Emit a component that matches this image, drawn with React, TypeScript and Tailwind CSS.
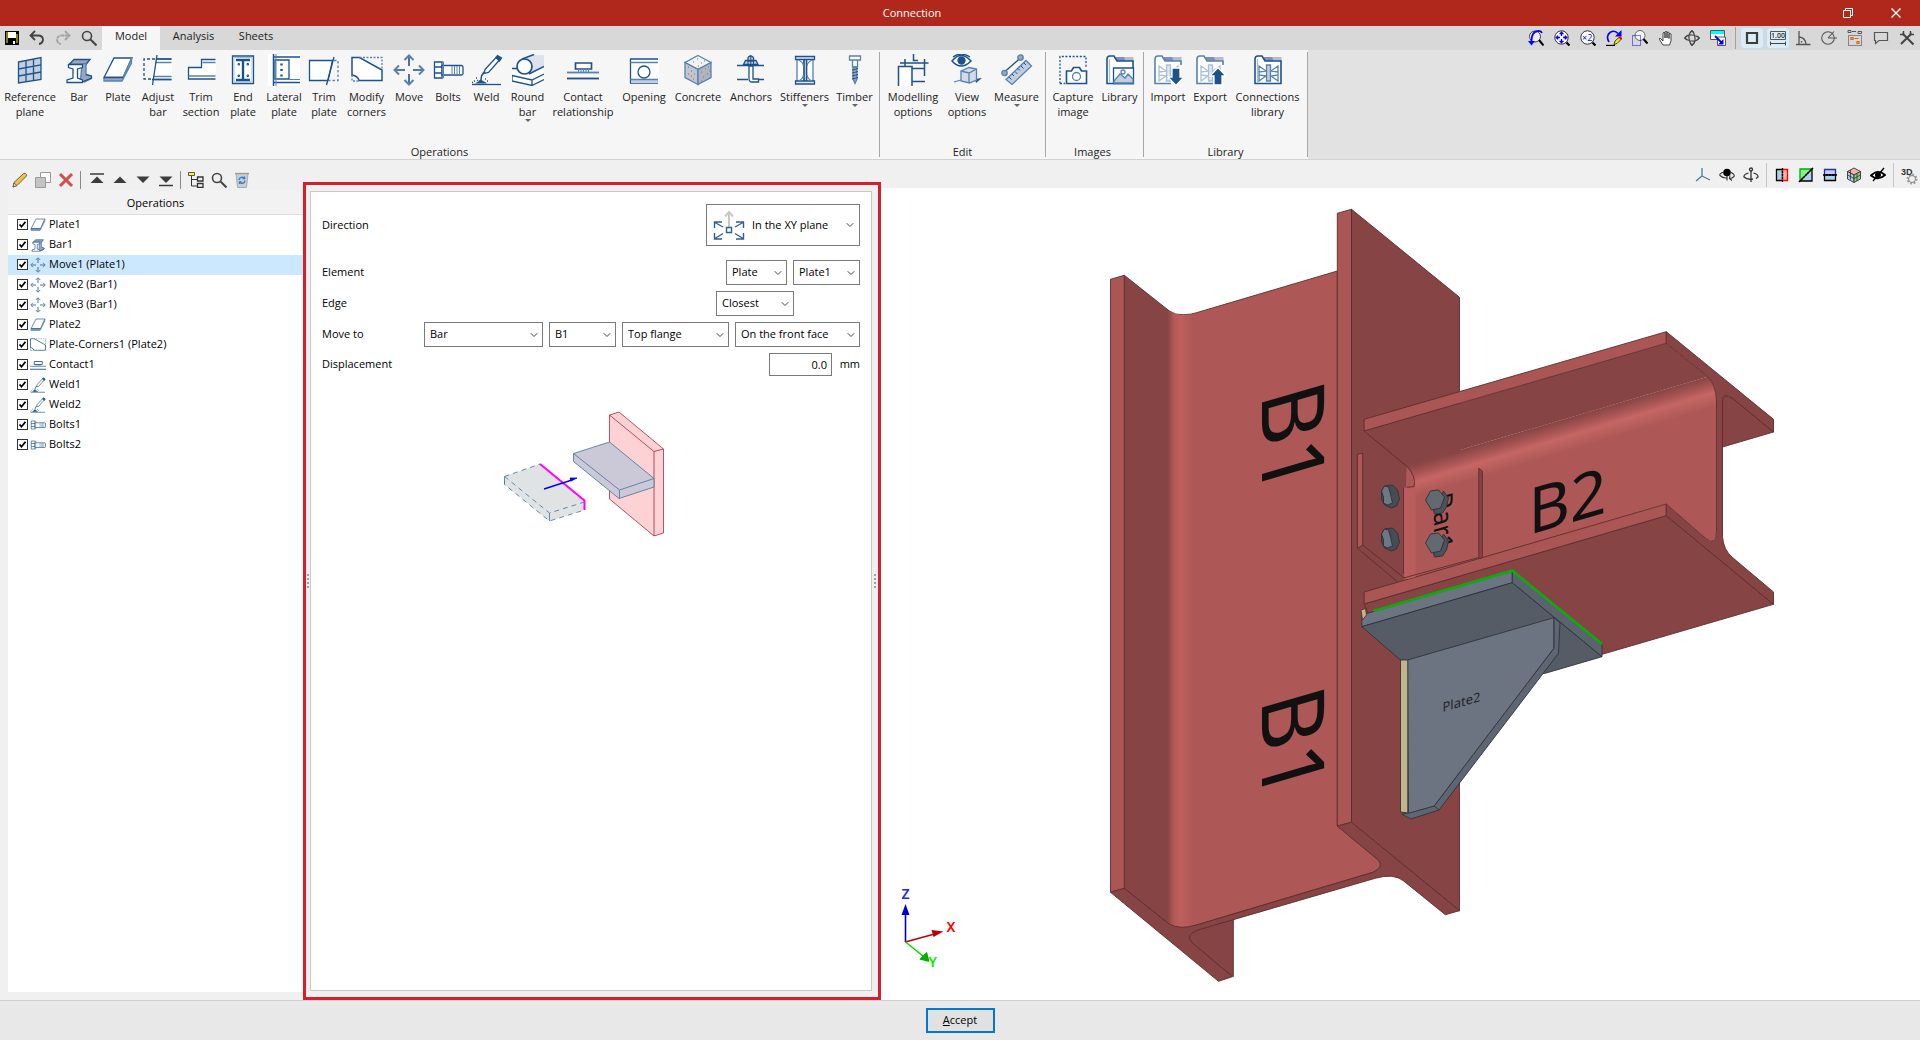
import React from "react";
import { ChevronDown } from "lucide-react";

type IconProps = { className?: string };

const DARK = "#1d528c";
const MID = "#5582b0";
const SOFT = "#c3cde0";

const Svg = ({ className = "size-8", box = 32, children }: { className?: string; box?: number; children: React.ReactNode }) => (
    <svg viewBox={`0 0 ${box} ${box}`} className={`${className} shrink-0`} fill="none" stroke={DARK} strokeWidth={1.3}>
        {children}
    </svg>
);

/* ---------- Ribbon icons ---------- */

const RefPlaneIcon = ({ className }: IconProps) => (
    <Svg className={className}>
        <path d="M4.5 8 27 3.5V25.5L4.5 29z" fill={SOFT} />
        <path d="M12 6.5v21M19.5 5v22M4.5 15 27 10.8M4.5 22 27 18" />
    </Svg>
);

const BarIcon = ({ className }: IconProps) => (
    <Svg className={className}>
        <path d="M11 5.500h16l-4 5H6z" fill="#9aa5bf" />
        <path d="M19 10.500 23 9v15l4.500 1-6 3-4-2z" fill="#9aa5bf" stroke={MID} />
        <path d="M5.500 10.500h14v3l-5 1.500v9l5 2v2.500H4V26l6-2v-9l-4.500-1.500z" fill="#fff" />
        <path d="M20 27.500 28.500 24v-2L23 20.500" fill="#9aa5bf" />
    </Svg>
);

const PlateIcon = ({ className }: IconProps) => (
    <Svg className={className}>
        <path d="M2 23.500 12 4h18l-9 19.500z" fill="#fff" />
        <path d="M2 23.500V27h18l9.500-18V4L21 23.500z" fill="#9aa5bf" stroke={MID} />
        <path d="M2 23.500h19" />
    </Svg>
);

const AdjustIcon = ({ className }: IconProps) => (
    <Svg className={className}>
        <path d="M14 6h16v19H10z" fill="#fff" stroke="none" />
        <path d="M14 5h15.500M13 8.500h16.500M11 22.500h18.500M10 25.500h19.500" stroke={MID} />
        <path d="M15 1 10.500 31M14 5h15.500M10 25.500h19.500" />
        <path d="M13 5H2v20h8" strokeDasharray="3 2" />
    </Svg>
);

const TrimSectionIcon = ({ className }: IconProps) => (
    <Svg className={className}>
        <path d="M3 13.500h12V5.500h15.500v20H3z" fill="#fff" stroke="none" />
        <path d="M30.500 5.500H16.500v8H3.500v11.500h27" />
        <path d="M30.500 8.500h-13M3.500 22h27" stroke={MID} />
    </Svg>
);

const EndPlateIcon = ({ className }: IconProps) => (
    <Svg className={className}>
        <path d="M5.500 2h21v27.500h-21z" fill="#fff" />
        <path d="M7 3.500h18V28H7z" stroke="#a9bdd6" strokeWidth={1} />
        <path d="M9 6h14M9 26h14M16 6v20" strokeWidth={2.400} />
        <path d="M11 9.500h1.500v1.500H11zM20 9.500h1.500v1.500H20zM11 21h1.500v1.500H11zM20 21h1.500v1.500H20z" strokeWidth={1} />
    </Svg>
);

const LateralPlateIcon = ({ className }: IconProps) => (
    <Svg className={className}>
        <path d="M0 0h32v32H0z" fill="#fff" stroke="none" />
        <path d="M5.500 0v32M5.500 3H32M5.500 28.500H32" strokeWidth={1.500} />
        <path d="M7 6h14v19H7z" />
        <path d="M5.500 25.500H32M8 0v32" stroke={MID} strokeWidth={1} />
        <path d="M13.500 9.500v2M13.500 15v2M13.500 20.500v2" strokeWidth={2.400} />
    </Svg>
);

const TrimPlateIcon = ({ className }: IconProps) => (
    <Svg className={className}>
        <path d="M1.500 6.500h23l-4.500 20H1.500z" fill="#fff" />
        <path d="M26 3 18.500 31" />
        <path d="M26 6.500h4v20h-9" strokeDasharray="2.500 2" stroke={MID} />
    </Svg>
);

const CornersIcon = ({ className }: IconProps) => (
    <Svg className={className}>
        <path d="M1 3.500h7.500L31 16v10.500H8Q7 22 1 21z" fill="#fff" strokeWidth={1.500} />
        <path d="M8.500 3.500H31V16" strokeDasharray="2 1.500" stroke={MID} />
        <path d="M1 21v6h7" strokeDasharray="2 1.500" stroke={MID} />
    </Svg>
);

const MoveIcon = ({ className }: IconProps) => (
    <Svg className={className}>
        <path d="M16 2v10M16 20v10M2 16h10M20 16h10" strokeWidth={1.600} />
        <path d="m11.500 6 4.500-4.500L20.500 6M11.500 26l4.500 4.500 4.500-4.500M6 11.500 1.500 16 6 20.500M26 11.500l4.500 4.500-4.500 4.500" stroke={MID} strokeWidth={2} />
    </Svg>
);

const BoltsIcon = ({ className }: IconProps) => (
    <Svg className={className}>
        <path d="M2.500 8H10v16H2.500zM2.500 13H10M2.500 19H10" fill="#fff" />
        <path d="M10 11.500h19.500q1.500 0 1.500 2v6q0 1.500-1.500 1.500H10z" fill="#fff" />
        <path d="M20 12v9M22.500 12v9M25 12v9M27.500 12v9M10 8h1.500v16H10" stroke={MID} strokeWidth={1} />
    </Svg>
);

const WeldIcon = ({ className }: IconProps) => (
    <Svg className={className}>
        <path d="m14 15.500 11-12 3.500 2.500-11 12.500-4.500 1z" fill="#fff" />
        <path d="m25 3.500 1.500-2 4 2.500-2 3z" fill={DARK} />
        <path d="m13 18-2.500 4-.5 4" strokeWidth={1.500} />
        <path d="M1 30.500h29" />
        <path d="M4 29.500q2-2 3-1.500 2-4 5-1 3 1 4 2.500z" fill={DARK} stroke="none" />
        <path d="M3 27h1M5 24h1M1 28.500h1M14 25h1M16 27h1M6 26.500h1" strokeWidth={1.500} />
    </Svg>
);

const RoundBarIcon = ({ className }: IconProps) => (
    <Svg className={className}>
        <path d="M0 16v14l20 1.500L32 25V15z" fill="#fff" stroke="none" />
        <path d="M12 4.500 22 1h10v11L17 20.500z" fill="#dde2ec" stroke="none" />
        <path d="M10 5 22 .5M17 20 32 12.500" strokeWidth={1.500} />
        <circle cx="12.500" cy="12.500" r="7.500" fill="#fff" strokeWidth={1.700} />
        <path d="M0 14.500h5M0 21.500l20 4.500 12-6M0 21.500V27l20 4.500V26M20 31.500 32 25.500" />
    </Svg>
);

const ContactIcon = ({ className }: IconProps) => (
    <Svg className={className}>
        <path d="M8.500 9h16v6h-16z" fill="#fff" strokeWidth={1.700} />
        <path d="M11.500 15v3M14 15v3M16.500 15v3M19 15v3M21.500 15v3" strokeWidth={1} stroke={MID} />
        <path d="M0 18.500h32" strokeWidth={1.800} stroke={MID} />
        <path d="M0 24.500h32" strokeWidth={1.800} />
    </Svg>
);

const OpeningIcon = ({ className }: IconProps) => (
    <Svg className={className}>
        <path d="M2.500 5H31v24H2.500z" fill="#fff" stroke="none" />
        <path d="M30 5H2.500v24H30" />
        <path d="M3 25.500h27V29H3z" fill={SOFT} stroke="none" />
        <path d="M2.500 8.500H30M2.500 25.500H30" stroke={MID} />
        <circle cx="16" cy="18" r="6" />
    </Svg>
);

const ConcreteIcon = ({ className }: IconProps) => (
    <Svg className={className}>
        <path d="m16 1.500 13 7-13 7-13-7z" fill="#f3f3f5" stroke={MID} />
        <path d="M3 8.500 16 15.500v15l-13-7z" fill="#c2c5cb" stroke={MID} />
        <path d="m29 8.500-13 7v15l13-7z" fill="#b0b5bd" stroke={MID} />
        <path d="M6 13h1M9 17h1M12 20h1M6 20h1M11 25h1M9 22h1M19 18h1M23 15h1M26 13h1M21 23h1M25 20h1M19 27h1M27 17h1M11 8h1M15 5h1M19 9h1M16 12h1M22 7h1" stroke="#6b7891" strokeWidth={1} />
    </Svg>
);

const AnchorsIcon = ({ className }: IconProps) => (
    <Svg className={className}>
        <path d="M13 3.500q1-1.500 2.500-1.500T18.500 3.500V7H13zM10.500 6.500h10.500l2 4H8.500z" fill={SOFT} />
        <path d="M2 11.500h27M2 25.500h11M24 25.500h5" strokeWidth={1.600} />
        <path d="M14 12v12.500q0 3.500 3 3.500h6.500v-3H18V12z" fill="#fff" />
        <path d="M15.800 1v10M13 6.500v4M18.500 6.500v4" strokeWidth={1} />
    </Svg>
);

const StiffenersIcon = ({ className }: IconProps) => (
    <Svg className={className}>
        <path d="M8 4h16v24H8z" fill="#fff" stroke={MID} />
        <path d="M6.500 2.500h19v3h-19zM6.500 27h19v3h-19z" fill="#e4e9f2" />
        <path d="M15 6v21M17.500 6v21" strokeWidth={1.700} />
        <path d="M9.500 6Q14 8 14.500 12M9.500 27Q14 25 14.500 21M23 6q-4.500 2-5 6M23 27q-4.500-2-5-6" stroke={MID} />
    </Svg>
);

const TimberIcon = ({ className }: IconProps) => (
    <Svg className={className}>
        <path d="M10.500 2h11v4h-11zM13.500 6h5v7h-5z" fill="#fff" stroke={MID} />
        <path d="M14 13h4v12l-2 4.500L14 25z" fill="#9aa5bf" stroke={MID} />
        <path d="m13 16 6-1.500M13 19l6-1.500M13 22l6-1.500M13 25l6-1.500" stroke={DARK} strokeWidth={1} />
    </Svg>
);

const ModellingIcon = ({ className }: IconProps) => (
    <Svg className={className}>
        <path d="M1.500 12.500H14V32H1.500z" fill="#fff" stroke="none" />
        <path d="M1.500 32V12.500H15V32M8 12V5M3 9h28.500M16.500 0v6.500H21M27.500 5v17M15 14.500h13M15 27.500h13" strokeWidth={1.500} />
    </Svg>
);

const ViewIcon = ({ className }: IconProps) => (
    <Svg className={className}>
        <path d="M1 7Q10-4 20 7 10 17 1 7z" fill="#fff" strokeWidth={1.500} />
        <path d="M2 3Q10-3 19 3" />
        <circle cx="10.500" cy="6.500" r="3.500" fill={DARK} />
        <path d="m24 25 7-1-6 5z" fill={DARK} stroke="none" />
        <path d="m10 17 8-3.500 7.500 1.500v11l-7 3-8.500-2z" fill="#d5dae4" stroke={MID} />
        <path d="m10 17 8 2 7.500-4M18 19v10M3 28l7-2" stroke={MID} />
    </Svg>
);

const MeasureIcon = ({ className }: IconProps) => (
    <Svg className={className}>
        <path d="M4 17.500 19 4.500" />
        <circle cx="3.500" cy="19" r="2.700" fill="#9aa5bf" stroke={MID} />
        <circle cx="19.500" cy="3.500" r="2.700" fill="#9aa5bf" stroke={MID} />
        <path d="m5 25.500 20-19L30.500 12 11 30.500z" fill={SOFT} stroke={MID} />
        <path d="m8 23 2.500 2.500M11 20l2 2M14 17.500l2.500 2.500M17 14.500l2 2M20 12l2.500 2.500M23 9l2 2" stroke={DARK} strokeWidth={1} />
    </Svg>
);

const CaptureIcon = ({ className }: IconProps) => (
    <Svg className={className}>
        <path d="M3 29.500V2.500h26V13M3 29.500h5" strokeDasharray="2 1.600" />
        <path d="M9.500 17h5l2-3.500h6l2 3.500h5v12.500h-20z" fill="#fff" strokeWidth={1.600} />
        <circle cx="19.500" cy="22.500" r="4" stroke={MID} />
    </Svg>
);

const FolderBase = () => (
    <>
        <path d="M12 3h17.500v6H12z" fill="#b4bdd0" stroke="none" />
        <path d="M12 3h8l1.500 4H12z" fill="#8190b2" stroke="none" />
        <path d="M3 5q0-3 3-3h4l3 5h16v22.500H3z" fill="#fff" strokeWidth={1.600} />
        <path d="M5.500 29V5" stroke="#a9bdd6" />
    </>
);

const LibraryIcon = ({ className }: IconProps) => (
    <Svg className={className}>
        <FolderBase />
        <path d="M9.500 14h20v15.500h-20z" fill="#fff" />
        <path d="m10 27 6-7 5 4 3-4 5 5v4H10z" fill={SOFT} stroke={MID} />
        <circle cx="19" cy="18" r="2" stroke={MID} />
    </Svg>
);

const JointMark = () => (
    <>
        <path d="M14.500 11h4v16h-4z" fill={SOFT} stroke={MID} />
        <path d="m7 12 7 5-7 1v3l7 1-7 5zM26 12l-7 5 7 1v3l-7 1 7 5z" stroke={MID} />
    </>
);

/* Folder left open on the right, where the arrow sits */
const OpenFolder = () => (
    <>
        <path d="M12 3h17.500v6H12z" fill="#b4bdd0" stroke="none" />
        <path d="M12 3h8l1.500 4H12z" fill="#8190b2" stroke="none" />
        <path d="M3 5q0-3 3-3h4l3 5h16v22.500H3z" fill="#fff" stroke="none" />
        <path d="M29 11V7H13l-3-5H6Q3 2 3 5v24.500h16" stroke={MID} strokeWidth={1.600} />
        <g opacity={0.500}><JointMark /></g>
    </>
);

const ImportIcon = ({ className }: IconProps) => (
    <Svg className={className}>
        <OpenFolder />
        <path d="M20 14h8v9h4l-8 8.500L16 23h4z" fill={DARK} stroke="#fff" />
    </Svg>
);

const ExportIcon = ({ className }: IconProps) => (
    <Svg className={className}>
        <OpenFolder />
        <path d="M20 31h8v-9h4l-8-8.500L16 22h4z" fill={DARK} stroke="#fff" />
    </Svg>
);

const ConnLibraryIcon = ({ className }: IconProps) => (
    <Svg className={className}>
        <FolderBase />
        <JointMark />
    </Svg>
);

/* ---------- Small toolbar icons ---------- */

const SaveIcon = () => (
    <Svg className="size-4" box={16}>
        <path d="M1 1h14v14H1z" fill="#000" stroke="none" />
        <path d="M2 2h2v11H2zM12 4h2v9h-2z" fill="#808000" stroke="none" />
        <path d="M4 2h8v6H4zM9 11h2v3H9z" fill="#fff" stroke="none" />
    </Svg>
);

const UndoIcon = () => (
    <Svg className="size-4" box={16}>
        <path d="M6 1 1.500 5.500 6 10M2 5.500h7q5 0 5 4.500-.5 3.500-4 4" stroke="#444" strokeWidth={1.800} />
    </Svg>
);

const RedoIcon = () => (
    <Svg className="size-4" box={16}>
        <path d="m10 1 4.500 4.500L10 10M14 5.500H7q-5 0-5 4.500.5 3.500 4 4" stroke="#a3a3a3" strokeWidth={1.800} strokeDasharray="4 .6" />
    </Svg>
);

const SearchIcon = () => (
    <Svg className="size-4" box={16}>
        <circle cx="6" cy="6" r="4.500" stroke="#444" strokeWidth={1.600} />
        <path d="m9.500 9.500 6 6" stroke="#444" strokeWidth={2} />
    </Svg>
);

const Lens = () => (
    <>
        <circle cx="7.500" cy="7.500" r="6.700" fill="#fff" stroke="#333" strokeWidth={1} />
        <path d="m12.500 12.500 3 3" stroke="#000" strokeWidth={2.200} />
    </>
);

const ZoomPrevIcon = () => (
    <Svg className="size-4" box={16}>
        <circle cx="7" cy="6.500" r="5.500" fill="#eee" stroke="#444" strokeWidth={1} />
        <path d="m11 10 4.500 5.500" stroke="#000" strokeWidth={2} />
        <path d="M14 3q-1-2.500-4-2Q3 2 3.500 12" stroke="#00f" strokeWidth={1.800} />
        <path d="M0 11h7l-3.500 4.500z" fill="#00f" stroke="none" />
    </Svg>
);

const ZoomAllIcon = () => (
    <Svg className="size-4" box={16}>
        <Lens />
        <path d="m7.500 1.500 2 2.500h-4zM7.500 13.500l2-2.500h-4zM1.500 7.500l2.500-2v4zM13.500 7.500l-2.500-2v4z" fill="#00f" stroke="#00f" strokeWidth={0.600} />
        <path d="M7.500 3v3M7.500 9v3M3 7.500h3M9 7.500h3" stroke="#00f" />
    </Svg>
);

const ZoomTwoIcon = () => (
    <Svg className="size-4" box={16}>
        <Lens />
        <text x="2" y="11" fill="#00f" stroke="none" fontSize="9" fontFamily="Open Sans, sans-serif">×2</text>
    </Svg>
);

const RedrawIcon = () => (
    <Svg className="size-4" box={16}>
        <path d="M3 12Q-.5 6 4 2.500 8.500-.5 12 3.500" stroke="#00f" strokeWidth={1.600} />
        <path d="M15.500 0v6.500H9z" fill="#00f" stroke="none" />
        <path d="m8 14.500 1-3.500 4.500-4 2 2-4.500 4.500z" fill="#ffe600" stroke="#000" strokeWidth={0.700} />
        <path d="m13.500 7 2 2" stroke="#d00" strokeWidth={2} />
        <path d="M0 15.500h9" stroke="#000" />
    </Svg>
);

const ZoomWindowIcon = () => (
    <Svg className="size-4" box={16}>
        <circle cx="8" cy="5.500" r="5" fill="#f4f4f4" stroke="#666" strokeWidth={1} />
        <path d="m11.500 9 4 4.500" stroke="#000" strokeWidth={2} />
        <path d="M.5 5.500h8v10h-8z" stroke="#00f" strokeWidth={1} strokeDasharray="1 1" />
    </Svg>
);

const HandIcon = () => (
    <Svg className="size-4" box={16}>
        <path d="M5 15 1.500 9.500Q1 8 2.500 8.500L5 11V3q1-1.500 2 0v5-6q1-1.500 2 0v6-5.500q1-1 2 0V8.500 4q1-1 2 0v7l-1.500 4z" fill="#fff" stroke="#333" strokeWidth={0.900} />
    </Svg>
);

const OrbitIcon = () => (
    <Svg className="size-4" box={16}>
        <path d="M8 1Q4.500 3 5 8t3 7q3.500-2 3-7T8 1zM1 8q2-3.500 7-3t7 3q-2 3.500-7 3T1 8z" stroke="#444" strokeWidth={1.200} />
        <path d="m6 3 2-2.500L10 3M6 13l2 2.500 2-2.500M3 6 .5 8 3 10M13 6l2.500 2-2.500 2" stroke="#444" strokeWidth={1.200} />
    </Svg>
);

const WindowsIcon = () => (
    <Svg className="size-4" box={16}>
        <path d="M.5.500h14v9H.5z" fill="#fff" stroke="#555" strokeWidth={1} />
        <path d="M1 1h13v3H1z" fill="#0ff" stroke="none" />
        <path d="M7.500 7h8v8.500h-8z" fill="#fff" stroke="#555" strokeWidth={1} />
        <path d="m5 6 6.500 6.500" stroke="#00f" strokeWidth={1.800} />
        <path d="M13.500 9v5.500H8z" fill="#00f" stroke="none" />
    </Svg>
);

const SquareIcon = () => (
    <Svg className="size-4" box={16}>
        <path d="M3 3h10v10H3z" stroke="#3c3c3c" strokeWidth={2.200} />
    </Svg>
);

const ScaleIcon = () => (
    <Svg className="size-4" box={16}>
        <path d="M.5 1.500h15v8H.5z" stroke="#555" strokeWidth={1} />
        <path d="M.5 13.500h15M.5 11.500v4M15.500 11.500v4" stroke="#444" strokeWidth={1} />
        <text x="1" y="8" fill="#333" stroke="none" fontSize="7" fontWeight="600" fontFamily="Open Sans, sans-serif">1.00</text>
    </Svg>
);

const AngleIcon = () => (
    <Svg className="size-4" box={16}>
        <path d="M4 1v13.500M1 14.500h14.500M4 7q6.500.5 7 7.500" stroke="#555" strokeWidth={1.300} />
        <path d="M6.500 11v1.500" stroke="#555" />
    </Svg>
);

const CircleAngleIcon = () => (
    <Svg className="size-4" box={16}>
        <circle cx="7" cy="8" r="6.300" stroke="#555" strokeWidth={1.100} />
        <path d="M7 8h9M7 8l6-6.500" stroke="#555" strokeWidth={1.100} />
    </Svg>
);

const LayoutIcon = () => (
    <Svg className="size-4" box={16}>
        <path d="M1.500 5.500h13v10h-13z" stroke="#333" strokeWidth={1} strokeDasharray="1 1" />
        <path d="M1 .5h3v2H1zM11 1.500h3.500v2H11zM5 1.500h4" stroke="#555" strokeWidth={1} />
        <path d="M4 7.500h2v2H4zM10 11.500h2v2h-2zM7.500 8.500h4" stroke="#d2632b" strokeWidth={1.200} />
    </Svg>
);

const CommentIcon = () => (
    <Svg className="size-4" box={16}>
        <path d="M1.500 2.500h13v8H6L2.500 13.500v-3h-1z" stroke="#555" strokeWidth={1.200} />
    </Svg>
);

const ToolsIcon = () => (
    <Svg className="size-4" box={16}>
        <path d="M12.500 3.500 2 14M3.500 3.500l11 11" stroke="#444" strokeWidth={2} />
        <path d="M1 4.500h3.500V1M11.500 1v3.500H15" stroke="#444" strokeWidth={1.500} />
    </Svg>
);

const AxisIcon = () => (
    <Svg className="size-4" box={16}>
        <path d="M7 1v8M7 9l-6 5M7 9l8 4" stroke="#4b7f93" strokeWidth={1.300} />
    </Svg>
);

const TurnEyeIcon = () => (
    <Svg className="size-4" box={16}>
        <circle cx="8" cy="5.500" r="3.800" fill="#000" stroke="none" />
        <path d="M5 5Q0 6.500 1 8.500q3 3 7 2.500M11 5q5 2 4 4.500-2 2-4 2M8 8.500v5M11 8.500l-.5 3 2.500 2" stroke="#333" strokeWidth={1.100} />
    </Svg>
);

const TurnAxisIcon = () => (
    <Svg className="size-4" box={16}>
        <path d="M8 3v12M5.500 6Q.5 7.500 1 10q3 3 9 2M10.500 6q5 1.500 4.500 4l-2 1.500" stroke="#333" strokeWidth={1.300} />
        <circle cx="8" cy="2.500" r="1.500" stroke="#333" />
    </Svg>
);

const SectionXIcon = () => (
    <Svg className="size-4" box={16}>
        <path d="M2.500 2.500h6v11h-6z" fill="#a8d5ee" stroke="#000" />
        <path d="M8.500 2.500h5v11h-5z" fill="#ffb4b4" stroke="#f00" />
        <path d="M8.500 1v14" stroke="#000" strokeDasharray="2 1" />
    </Svg>
);

const SectionYIcon = () => (
    <Svg className="size-4" box={16}>
        <path d="M2 2h12L2 14z" fill="#7cf58a" stroke="#0a0" />
        <path d="M14 2v12H2z" fill="#a8d5ee" stroke="#000" />
        <path d="M1 15 15 1" stroke="#000" strokeDasharray="2 1" />
    </Svg>
);

const SectionZIcon = () => (
    <Svg className="size-4" box={16}>
        <path d="M2.500 2.500h11V8h-11z" fill="#cfc8ff" stroke="#22339a" />
        <path d="M2.500 8h11v5.500h-11z" fill="#a8d5ee" stroke="#000" />
        <path d="M1 8h14" stroke="#000" strokeDasharray="2 1" />
    </Svg>
);

const CubeIcon = () => (
    <Svg className="size-4" box={16}>
        <path d="m8 1 6.500 3.500L8 8 1.500 4.500z" fill="#ffaeae" stroke="#333" strokeWidth={0.900} />
        <path d="M1.500 4.500 8 8v7.500L1.500 12z" fill="#a8cfe4" stroke="#333" strokeWidth={0.900} />
        <path d="M14.500 4.500 8 8v7.500L14.500 12z" fill="#8fce8a" stroke="#333" strokeWidth={0.900} />
        <path d="M1.500 8 8 11.500 14.500 8M4.500 3v9.500M11 6.500V14" stroke="#333" strokeWidth={0.800} />
    </Svg>
);

const HideIcon = () => (
    <Svg className="size-4" box={16}>
        <path d="M1 8.500Q8 1.500 15 8 8 14.500 1 8.500z" fill="#fff" stroke="#000" strokeWidth={1.800} />
        <circle cx="8" cy="8" r="3" fill="#000" stroke="none" />
        <path d="m3 14 11-13" stroke="#000" strokeWidth={1.300} />
    </Svg>
);

const ThreeDIcon = () => (
    <Svg className="size-5" box={20}>
        <circle cx="13" cy="14" r="4" stroke="#999" strokeWidth={3} strokeDasharray="1.600 1.500" />
        <circle cx="13" cy="14" r="3.500" stroke="#888" strokeWidth={1} fill="#eee" />
        <text x="2" y="10" fill="#333" stroke="none" fontSize="9" fontWeight="700" fontFamily="Liberation Sans, sans-serif">3D</text>
    </Svg>
);

const PencilIcon = () => (
    <Svg className="size-4" box={16}>
        <path d="m1 15 1-4.500L11.500 1.500q2-1 3 1 .5 1-.5 2L5 13.500z" fill="#f0c33c" stroke="#555" strokeWidth={0.900} />
        <path d="m1 15 1-4 3 2.500z" fill="#e8dccb" stroke="#555" strokeWidth={0.800} />
    </Svg>
);

const CopyIcon = () => (
    <Svg className="size-4" box={16}>
        <path d="M5.500.5h10v10h-10z" fill="#fff" stroke="#999" strokeWidth={1} />
        <path d="M.5 5.500h10v10H.5z" fill="#c4c4c4" stroke="#999" strokeWidth={1} />
    </Svg>
);

const DeleteIcon = () => (
    <Svg className="size-4" box={16}>
        <path d="m2 2 12 12M14 2 2 14" stroke="#d2504c" strokeWidth={3} />
    </Svg>
);

const ToTopIcon = () => (
    <Svg className="size-4" box={16}>
        <path d="M1 2h14" stroke="#3c3c3c" strokeWidth={1.500} />
        <path d="m8 4.500 6.500 6.500h-13z" fill="#3c3c3c" stroke="none" />
    </Svg>
);

const UpIcon = () => (
    <Svg className="size-4" box={16}>
        <path d="m8 4.500 6.500 6.500h-13z" fill="#3c3c3c" stroke="none" />
    </Svg>
);

const DownIcon = () => (
    <Svg className="size-4" box={16}>
        <path d="M8 11 1.500 4.500h13z" fill="#3c3c3c" stroke="none" />
    </Svg>
);

const ToBottomIcon = () => (
    <Svg className="size-4" box={16}>
        <path d="M8 11 1.500 4.500h13z" fill="#3c3c3c" stroke="none" />
        <path d="M1 13.500h14" stroke="#3c3c3c" strokeWidth={1.500} />
    </Svg>
);

const TreeIcon = () => (
    <Svg className="size-4" box={16}>
        <path d="M.5.500h6v3h-6z" fill="#ff0" stroke="#555" strokeWidth={1} />
        <path d="M3.500 4v10H9M3.500 7.500H9" stroke="#333" strokeWidth={1} />
        <path d="M9.500 5h5.500v4H9.500zM9.500 11.500h5.500v4H9.500z" stroke="#333" />
    </Svg>
);

const TrashIcon = () => (
    <Svg className="size-4" box={16}>
        <path d="M2 1.500h12L12.500 15.500h-9z" fill="#ccc" stroke="#aaa" strokeWidth={1} />
        <path d="M1 1.500h14" stroke="#999" />
        <path d="M5 8a3 3 0 0 1 5.500-1.500M11 8.500A3 3 0 0 1 5.500 10M10.500 4.500v2h-2M5.500 12v-2h2" stroke="#1b7fe0" />
    </Svg>
);

/* ---------- Data ---------- */

type Tool = { label: string; icon: React.ComponentType<IconProps>; width: string; more?: boolean };

const groups: { name: string; pad?: string; tools: Tool[] }[] = [
    {
        name: "Operations",
        tools: [
            { label: "Reference\nplane", icon: RefPlaneIcon, width: "w-[60px]" },
            { label: "Bar", icon: BarIcon, width: "w-[38px]" },
            { label: "Plate", icon: PlateIcon, width: "w-[40px]" },
            { label: "Adjust\nbar", icon: AdjustIcon, width: "w-[40px]" },
            { label: "Trim\nsection", icon: TrimSectionIcon, width: "w-[46px]" },
            { label: "End\nplate", icon: EndPlateIcon, width: "w-[38px]" },
            { label: "Lateral\nplate", icon: LateralPlateIcon, width: "w-[44px]" },
            { label: "Trim\nplate", icon: TrimPlateIcon, width: "w-[36px]" },
            { label: "Modify\ncorners", icon: CornersIcon, width: "w-[49px]" },
            { label: "Move", icon: MoveIcon, width: "w-[36px]" },
            { label: "Bolts", icon: BoltsIcon, width: "w-[42px]" },
            { label: "Weld", icon: WeldIcon, width: "w-[35px]" },
            { label: "Round\nbar", icon: RoundBarIcon, width: "w-[47px]", more: true },
            { label: "Contact\nrelationship", icon: ContactIcon, width: "w-[64px]" },
            { label: "Opening", icon: OpeningIcon, width: "w-[58px]" },
            { label: "Concrete", icon: ConcreteIcon, width: "w-[50px]" },
            { label: "Anchors", icon: AnchorsIcon, width: "w-[56px]" },
            { label: "Stiffeners", icon: StiffenersIcon, width: "w-[51px]", more: true },
            { label: "Timber", icon: TimberIcon, width: "w-[49px]", more: true },
        ],
    },
    {
        name: "Edit",
        tools: [
            { label: "Modelling\noptions", icon: ModellingIcon, width: "w-[66px]" },
            { label: "View\noptions", icon: ViewIcon, width: "w-[42px]" },
            { label: "Measure", icon: MeasureIcon, width: "w-[57px]", more: true },
        ],
    },
    {
        name: "Images",
        pad: "pr-1",
        tools: [
            { label: "Capture\nimage", icon: CaptureIcon, width: "w-[54px]" },
            { label: "Library", icon: LibraryIcon, width: "w-[39px]" },
        ],
    },
    {
        name: "Library",
        tools: [
            { label: "Import", icon: ImportIcon, width: "w-[48px]" },
            { label: "Export", icon: ExportIcon, width: "w-[36px]" },
            { label: "Connections\nlibrary", icon: ConnLibraryIcon, width: "w-[79px]" },
        ],
    },
];

const operations: { name: string; icon: React.ComponentType<IconProps>; selected?: boolean }[] = [
    { name: "Plate1", icon: PlateIcon },
    { name: "Bar1", icon: BarIcon },
    { name: "Move1 (Plate1)", icon: MoveIcon, selected: true },
    { name: "Move2 (Bar1)", icon: MoveIcon },
    { name: "Move3 (Bar1)", icon: MoveIcon },
    { name: "Plate2", icon: PlateIcon },
    { name: "Plate-Corners1 (Plate2)", icon: CornersIcon },
    { name: "Contact1", icon: ContactIcon },
    { name: "Weld1", icon: WeldIcon },
    { name: "Weld2", icon: WeldIcon },
    { name: "Bolts1", icon: BoltsIcon },
    { name: "Bolts2", icon: BoltsIcon },
];

/* ---------- Building blocks ---------- */

const IconButton = ({ label, width, children }: { label: string; width: string; children: React.ReactNode }) => (
    <button type="button" aria-label={label} className={`${width} flex items-center justify-center shrink-0`}>
        {children}
    </button>
);

const Select = ({ label, value, width }: { label: string; value: string; width: string }) => (
    <div className={`${width} relative`}>
        <select
            aria-label={label}
            defaultValue={value}
            className="w-full h-[25px] appearance-none border border-[#7a7a7a] bg-white pl-[5px] outline-none"
        >
            <option>{value}</option>
        </select>
        <ChevronDown size={12} strokeWidth={2} className="absolute right-[3px] top-[7px] text-[#444] pointer-events-none" />
    </div>
);

const Grip = ({ className }: { className: string }) => (
    <div className={`${className} flex flex-col justify-center items-center gap-[2px] pb-5`}>
        <span className="size-[2px] bg-[#a0a0a0]" />
        <span className="size-[2px] bg-[#a0a0a0]" />
        <span className="size-[2px] bg-[#a0a0a0]" />
        <span className="size-[2px] bg-[#a0a0a0]" />
    </div>
);

const TitleBar = () => (
    <header className="h-[26px] bg-[#b0281c] text-white flex">
        <h1 className="flex-1 flex items-center justify-center">Connection</h1>
        <button type="button" aria-label="Restore" className="w-12 flex items-center justify-center">
            <svg viewBox="0 0 10 10" className="size-[10px]" fill="none" stroke="#fff">
                <path d="M.5 2.500h7v7h-7zM2.500 2.500v-2h7v7h-2" />
            </svg>
        </button>
        <button type="button" aria-label="Close" className="w-12 flex items-center justify-center">
            <svg viewBox="0 0 10 10" className="size-[10px]" stroke="#fff" strokeWidth={1.400}>
                <path d="m.5.500 9 9M9.500.500l-9 9" />
            </svg>
        </button>
    </header>
);

const TabBar = () => (
    <div className="h-6 bg-[#d8d8d8] flex text-[#222]">
        <IconButton label="Save" width="w-6"><SaveIcon /></IconButton>
        <IconButton label="Undo" width="w-[26px]"><UndoIcon /></IconButton>
        <IconButton label="Redo" width="w-[26px]"><RedoIcon /></IconButton>
        <IconButton label="Search" width="w-[26px]"><SearchIcon /></IconButton>
        <nav className="flex leading-5">
            <button type="button" className="w-[58px] bg-[#f6f6f6] pb-1">Model</button>
            <button type="button" className="w-[67px] pb-1">Analysis</button>
            <button type="button" className="w-[58px] pb-1">Sheets</button>
        </nav>
        <div className="ml-auto flex">
            <IconButton label="Previous view" width="w-[26px]"><ZoomPrevIcon /></IconButton>
            <IconButton label="Zoom all" width="w-[26px]"><ZoomAllIcon /></IconButton>
            <IconButton label="Zoom x2" width="w-[26px]"><ZoomTwoIcon /></IconButton>
            <IconButton label="Redraw" width="w-[26px]"><RedrawIcon /></IconButton>
            <IconButton label="Zoom window" width="w-[26px]"><ZoomWindowIcon /></IconButton>
            <IconButton label="Pan" width="w-[26px]"><HandIcon /></IconButton>
            <IconButton label="Orbit" width="w-[26px]"><OrbitIcon /></IconButton>
            <IconButton label="Windows" width="w-[26px]"><WindowsIcon /></IconButton>
            <div className="w-px my-px mx-1 bg-[#a0a0a0]" />
            <button type="button" aria-label="Frame" className="w-6 my-px rounded-sm border border-[#c3dcea] bg-[#dcecf6] flex items-center justify-center"><SquareIcon /></button>
            <button type="button" aria-label="Dimensions" className="w-6 my-px ml-[2px] rounded-sm border border-[#c3dcea] bg-[#dcecf6] flex items-center justify-center"><ScaleIcon /></button>
            <IconButton label="Angle" width="w-[26px]"><AngleIcon /></IconButton>
            <IconButton label="Radius" width="w-[26px]"><CircleAngleIcon /></IconButton>
            <IconButton label="Layout" width="w-[26px]"><LayoutIcon /></IconButton>
            <IconButton label="Comment" width="w-[26px]"><CommentIcon /></IconButton>
            <IconButton label="Settings" width="w-[26px]"><ToolsIcon /></IconButton>
        </div>
    </div>
);

const Ribbon = () => (
    <div className="h-[110px] bg-[#e2e2e2] border-b border-[#d2d2d2] flex text-[#222]">
        {groups.map((group) => (
            <section key={group.name} className="bg-[#f6f6f6] flex">
                <div className={`${group.pad ?? ""} flex flex-col justify-between`}>
                    <div className="flex items-start pt-1">
                        {group.tools.map(({ label, icon: Icon, width, more }) => (
                            <button key={label} type="button" className={`${width} flex flex-col items-center`}>
                                <Icon className="size-8" />
                                <span className="mt-[3px] whitespace-pre leading-[15px]">{label}</span>
                                {more && <span className="border-x-3 border-t-3 border-x-transparent border-t-[#666]" />}
                            </button>
                        ))}
                    </div>
                    <h2 className="text-center leading-[15px]">{group.name}</h2>
                </div>
                <div className="w-px my-[2px] bg-[#a8a8a8]" />
            </section>
        ))}
    </div>
);

const OperationsPanel = () => (
    <aside className="w-[303px] shrink-0 pl-2 pb-2 flex flex-col">
        <div className="h-[31px] pt-2 flex items-center">
            <IconButton label="Edit" width="w-[23px]"><PencilIcon /></IconButton>
            <IconButton label="Copy" width="w-[23px]"><CopyIcon /></IconButton>
            <IconButton label="Delete" width="w-[23px]"><DeleteIcon /></IconButton>
            <div className="w-px h-[18px] ml-[3px] mr-1 bg-[#888]" />
            <IconButton label="Move to top" width="w-[23px]"><ToTopIcon /></IconButton>
            <IconButton label="Move up" width="w-[23px]"><UpIcon /></IconButton>
            <IconButton label="Move down" width="w-[23px]"><DownIcon /></IconButton>
            <IconButton label="Move to bottom" width="w-[23px]"><ToBottomIcon /></IconButton>
            <div className="w-px h-[18px] mx-[3px] bg-[#888]" />
            <IconButton label="Tree" width="w-[23px]"><TreeIcon /></IconButton>
            <IconButton label="Find" width="w-[23px]"><SearchIcon /></IconButton>
            <IconButton label="Purge" width="w-[23px]"><TrashIcon /></IconButton>
        </div>
        <h2 className="h-6 bg-[#f2f2f2] border-b border-[#ddd] text-center leading-6">Operations</h2>
        <ul className="flex-1 bg-white">
            {operations.map(({ name, icon: Icon, selected }) => (
                <li key={name} className={selected ? "bg-[#cce8ff]" : ""}>
                    <label className="h-5 pl-[9px] pb-px flex items-center">
                        <span className="relative size-[11px] mr-[2px]">
                            <input type="checkbox" defaultChecked className="peer block size-[11px] appearance-none border border-[#333] bg-white" />
                            <svg viewBox="0 0 11 11" className="absolute inset-0 hidden peer-checked:block pointer-events-none" fill="none" stroke="#000" strokeWidth={1.800}>
                                <path d="m2.500 5.500 2 2.200 4-5" />
                            </svg>
                        </span>
                        <Icon className="size-4" />
                        <span className="ml-[3px]">{name}</span>
                    </label>
                </li>
            ))}
        </ul>
    </aside>
);

const PlaneIcon = () => (
    <svg viewBox="0 0 32 32" className="size-8" fill="none" stroke="#2f5f9b" strokeWidth={1.400}>
        <path d="M16 18V4M12 7.500l4-4.500 4 4.500" stroke="#c8c8c8" strokeWidth={2} />
        <path d="M13.500 18.500h5v5h-5z" />
        <path d="m10 18-8-4.500M1.500 19v-6H9M22 18l8-4.500M30.500 19v-6H23M10 24.500l-8 5M1.500 24v6H9M22 24.500l8 5M30.500 24v6H23" />
    </svg>
);

const MovePreview = () => (
    <svg viewBox="0 0 220 170" className="w-[220px] h-[170px] mx-auto mt-[13px]" strokeWidth={0.800} strokeLinejoin="round">
        {/* Destination face */}
        <g fill="#fcd2d4" stroke="#a52a45">
            <path d="M128.500 26 138 23l44.500 37V144l-9.500 3-44.500-37z" />
            <path d="M128.500 26 173 62.500V147M173 62.500l9.500-2.500" fill="none" />
        </g>
        <path d="M92.500 64.500 128.500 53 173 89.500v8.500l-35 11.500-45.500-37z" fill="#cbc9d8" stroke="#46709c" />
        <path d="M92.500 64.500 138.500 101v8.500M138.500 101 173 89.500" fill="none" stroke="#46709c" />
        {/* Moving plate */}
        <path d="M23.500 87.500 59 75l44.500 37v9L68.500 132 23.500 95.500z" fill="#e0e3e3" stroke="#46709c" strokeDasharray="5 4" />
        <path d="M23.500 87.500 68.500 124 103.500 113" fill="none" stroke="#46709c" strokeDasharray="5 4" />
        <path d="M68.500 124v8M23.500 87.500v8" stroke="#46709c" />
        <path d="m59 75 44.500 36.500V121" fill="none" stroke="#f0f" strokeWidth={2} />
        <path d="m63 100 28-9" stroke="#00f" strokeWidth={1.400} />
        <path d="m96 89-6 3-1-3z" fill="#00f" stroke="#00f" />
    </svg>
);

const PropertiesPanel = () => (
    <section className="w-[578px] shrink-0 mt-[22px] border-[3px] border-[#d3202c] flex">
        <Grip className="w-1" />
        <div className="flex-1 my-[6px] bg-white border border-[#c8c8c8] px-[11px] pt-3">
            <div className="flex items-center justify-between">
                <span>Direction</span>
                <button type="button" className="w-[154px] h-[42px] border border-[#7a7a7a] flex items-center pl-[6px]">
                    <PlaneIcon />
                    <span className="ml-[7px]">In the XY plane</span>
                    <ChevronDown size={12} className="ml-auto mr-[3px] text-[#444]" />
                </button>
            </div>
            <div className="mt-[14px] flex items-center gap-[6px]">
                <span className="mr-auto">Element</span>
                <Select label="Element type" value="Plate" width="w-[61px]" />
                <Select label="Element" value="Plate1" width="w-[67px]" />
            </div>
            <div className="mt-[6px] flex items-center justify-between">
                <span>Edge</span>
                <div className="pr-[66px]">
                    <Select label="Edge" value="Closest" width="w-[78px]" />
                </div>
            </div>
            <div className="mt-[6px] flex items-center gap-[6px]">
                <span className="mr-auto">Move to</span>
                <Select label="Target type" value="Bar" width="w-[119px]" />
                <Select label="Target" value="B1" width="w-[67px]" />
                <Select label="Target part" value="Top flange" width="w-[107px]" />
                <Select label="Target face" value="On the front face" width="w-[125px]" />
            </div>
            <div className="mt-[6px] flex items-center">
                <label htmlFor="displacement" className="mr-auto">Displacement</label>
                <input id="displacement" defaultValue="0.0" className="w-[63px] h-[23px] border border-[#7a7a7a] bg-white px-1 text-right outline-none" />
                <span className="w-7 text-right">mm</span>
            </div>
            <MovePreview />
        </div>
        <Grip className="w-[6px]" />
    </section>
);

const Bolt = ({ x, y, side }: { x: number; y: number; side?: boolean }) => (
    <g transform={`translate(${x} ${y})`} stroke="#2c3238" strokeWidth={0.900}>
        {side ? (
            <>
                <path d="m-9-5 3-5 8-1 5 5 2 9-3 7-5 2-7-3-3-6z" fill="#474c52" />
                <path d="M-9-5q3 6 2 12l4 2 5-2-2-9-2-7-4-1z" fill="#6d7884" />
            </>
        ) : (
            <>
                <path d="m-3 9 10-19 5 7-2 9-4 6-8 1z" fill="#4c5259" />
                <path d="m-11-1 5-9 8-1 6 7-4 11-9 2z" fill="#626971" />
            </>
        )}
    </g>
);

const Model = () => (
    <svg
        viewBox="882 188 1038 812"
        className="w-full h-full"
        fontFamily="Noto Sans, Open Sans, sans-serif"
        stroke="#5d2c2d"
        strokeWidth={0.900}
        strokeLinejoin="round"
    >
        <defs>
            <linearGradient id="columnFillet" x1="0" x2="1" y1="0" y2="0">
                <stop offset="0" stopColor="#874444" />
                <stop offset="0.250" stopColor="#b25957" />
                <stop offset="0.550" stopColor="#be5f5e" />
                <stop offset="1" stopColor="#ad5856" />
            </linearGradient>
            <linearGradient id="beamFillet" gradientUnits="userSpaceOnUse" x1="1536" y1="428" x2="1545" y2="458">
                <stop offset="0" stopColor="#874444" />
                <stop offset="0.300" stopColor="#a75554" />
                <stop offset="0.550" stopColor="#c56664" />
                <stop offset="1" stopColor="#ad5856" />
            </linearGradient>
        </defs>

        {/* Column B1 */}
        <path d="M1124.800 275.300 1169.500 310.700V924l-44.700-35.700z" fill="#874444" />
        <path d="M1111 279.300 1124.800 275.300V888.300L1111 892.300z" fill="#a95654" />
        <path d="M1169 310.500Q1176 315.500 1184 314.700 1192 314.500 1197 312.700L1337.800 271V826L1378 859.300Q1386 866 1373.500 872.300L1197 925Q1183 930 1169 924z" fill="#ad5856" />
        <path d="M1168 310Q1176 315.500 1184 314.700H1193V926.500Q1180 929 1168 923z" fill="url(#columnFillet)" stroke="none" />
        <path d="M1337.800 213.300 1352 209.300V822.300L1337.800 826z" fill="#a95654" />
        <path d="M1352 209.300 1460 297.300V910.700L1352 822.300z" fill="#874444" />
        <path d="M1233.800 914V976.700L1192 945 1188 934z" fill="#874444" />
        <path
            d="M1111 892.300 1124.800 888.300 1169.500 924Q1180 930 1197 925L1373.500 872.300Q1386 867 1378 859.300L1337.800 826 1352 822.300 1460 910.700 1445.800 914.700 1403.800 880.700Q1394 873 1375.700 878.300L1198.500 930Q1185 935 1192.700 942.700L1232.900 976.700 1219 981.300z"
            fill="#874444"
        />

        {/* Beam B2 */}
        <path d="M1723 395 1733 398 1774 432 1723 447z" fill="#874444" />
        <path d="M1364.600 604 1666.800 515.700 1774 604.300 1590 658 1540 670 1380 640z" fill="#874444" />
        <path d="M1407 466 1708 377 1717 400V530Q1717 545 1706 538.300L1666.800 504 1404 582z" fill="#ad5856" stroke="none" />
        <path d="M1364.600 431 1666.800 343.300 1708.300 376.700 1407 466z" fill="#874444" stroke="none" />
        <path d="M1407 466 1708.300 376.700Q1716 385 1717 400V410L1415.500 499Q1416 476 1407 466z" fill="url(#beamFillet)" stroke="none" />
        <path d="M1364.600 431 1407 466Q1417 476 1414.600 486.700L1407 487.300" fill="none" />
        <path d="M1364.600 419.300 1666.800 331.700V343.300L1364.600 431z" fill="#a95654" />
        <path d="M1364.600 592 1666.800 504V515.700L1364.600 604z" fill="#a95654" />
        <path
            d="M1666.800 331.700 1774 419.300V432L1733 398.300Q1723 391 1723 402V536.700Q1724 550 1733 557.500L1774 592V604.300L1666.800 515.700V504L1706 538.300Q1717 546 1717 531V400Q1716 385 1708.300 376.700L1666.800 343.300z"
            fill="#874444"
        />

        {/* Angle Bar1 */}
        <path d="M1363.200 431 1404 465V578L1363.200 545z" fill="#874444" stroke="none" />
        <path d="M1357.900 454.300 1363.200 453.300V545L1357.900 548.300z" fill="#ad5856" />
        <path d="M1363.200 545 1404.700 578M1357.900 548.300 1398 581.700" />
        <path d="M1404 487Q1409 489 1416 487V577L1408 579Q1404 578 1404 572z" fill="#bb5d5c" stroke="none" />
        <path d="M1404 487.300V574M1404 578 1479 557.500" />
        <path d="M1479.300 468.300 1482.900 471V557.700L1479.300 558.500z" fill="#874444" />
        <g fill="#111" stroke="none">
            <text transform="matrix(0 1 -1 .290 1262 394)" fontSize="87">B1</text>
            <text transform="matrix(0 1 -1 .290 1262 699)" fontSize="87">B1</text>
            <text transform="matrix(1 -.290 0 1 1529 535)" fontSize="64">B2</text>
            <text transform="matrix(0 1 -1 .290 1434 496)" fontSize="26">Bar1</text>
        </g>
        <Bolt x={1391} y={496} side />
        <Bolt x={1391} y={539} side />
        <Bolt x={1437} y={501} />
        <Bolt x={1437} y={544} />

        {/* Plate1 */}
        <g stroke="#2f353b">
            <path d="M1362.300 615 1512.800 570.700V582.700L1362.300 626.700z" fill="#6b7480" />
            <path d="M1362.300 626.700 1512.800 582.700 1602.500 656.700 1545 673.500 1401 660z" fill="#555c65" />
            <path d="M1512.800 570.700 1602.500 644V656.700L1512.800 582.700z" fill="#5b646e" />
        </g>
        <path d="M1374 611 1512.800 570.700 1602.500 644" fill="none" stroke="#0faa0f" strokeWidth={2.800} />
        <path d="M1361.500 610 1366 608.500 1367 615 1363 620z" fill="#c0b68a" />

        {/* Plate2 */}
        <g stroke="#2f353b">
            <path d="M1554.300 617.700 1560.500 622.700 1559 653.300 1439.500 810 1411.400 819 1402.500 814.300 1434.600 806 1554.300 648.300z" fill="#5e6573" />
            <path d="M1408 660 1554.300 617.700V648.300L1434.600 806 1408.800 813.300z" fill="#6b7480" />
            <path d="m1434.600 806 4.900 4" />
            <path d="M1401 660h7.300V813l-7.300-1z" fill="#c0b68a" />
        </g>
        <text transform="matrix(1 -.290 0 1 1443 712)" fontSize="13" fill="#23272b" stroke="none">Plate2</text>

        {/* Axes */}
        <g strokeWidth={1.600} fontSize="14" fontWeight="600">
            <path d="M906 942V914" stroke="#0000d0" />
            <path d="m906 904 4 11h-8z" fill="#0000d0" stroke="none" />
            <path d="m906 942 29-8" stroke="#c00000" />
            <path d="m944 931.500-12-1.500 2 7z" fill="#c00000" stroke="none" />
            <path d="m906 942 20 16" stroke="#00e000" />
            <path d="m929 961-2-8-6 6z" fill="#00b000" stroke="#00b000" />
            <text x="902" y="899" fill="#22f" stroke="none">Z</text>
            <text x="947" y="932" fill="#f00" stroke="none">X</text>
            <text x="929" y="967" fill="#0e0" stroke="none">Y</text>
        </g>
    </svg>
);

const Viewport = () => (
    <main className="flex-1 min-w-0 flex flex-col">
        <div className="h-7 flex justify-end items-center pt-[2px]">
            <IconButton label="Axes" width="w-6"><AxisIcon /></IconButton>
            <IconButton label="Turn view" width="w-6"><TurnEyeIcon /></IconButton>
            <IconButton label="Turn around axis" width="w-6"><TurnAxisIcon /></IconButton>
            <div className="w-px h-6 mx-[3px] bg-[#c4c4c4]" />
            <IconButton label="Section X" width="w-6"><SectionXIcon /></IconButton>
            <IconButton label="Section Y" width="w-6"><SectionYIcon /></IconButton>
            <IconButton label="Section Z" width="w-6"><SectionZIcon /></IconButton>
            <IconButton label="Solid view" width="w-6"><CubeIcon /></IconButton>
            <IconButton label="Hide" width="w-6"><HideIcon /></IconButton>
            <div className="w-px h-6 mx-[3px] bg-[#c4c4c4]" />
            <IconButton label="3D settings" width="w-[23px]"><ThreeDIcon /></IconButton>
        </div>
        <div className="flex-1 min-h-0 bg-white">
            <Model />
        </div>
    </main>
);

const App = () => {
    return (
        <div className="h-screen flex flex-col bg-[#f0f0f0] text-black text-[11px] font-['Open_Sans','Noto_Sans',sans-serif]">
            <TitleBar />
            <TabBar />
            <Ribbon />
            <div className="flex-1 min-h-0 flex">
                <OperationsPanel />
                <PropertiesPanel />
                <Viewport />
            </div>
            <footer className="h-10 bg-[#e8e8e8] border-t border-[#cfcfcf] flex items-center justify-center">
                <button type="button" className="w-[69px] h-[25px] bg-[#e1e1e1] border-2 border-[#0078d7]">
                    <u>A</u>ccept
                </button>
            </footer>
        </div>
    );
};

export default App;
